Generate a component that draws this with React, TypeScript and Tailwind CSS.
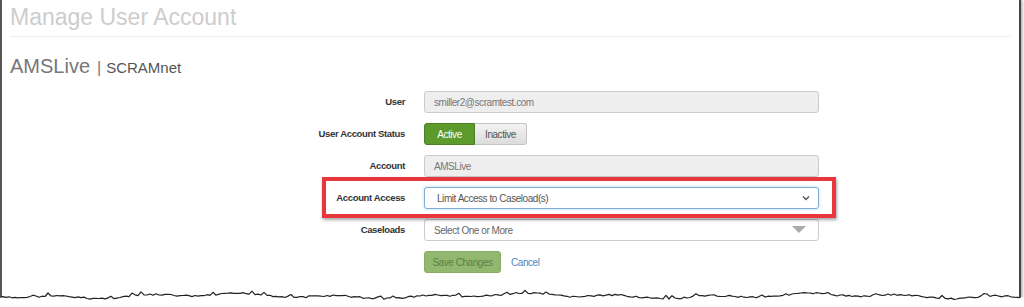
import React from "react";

const FONT = { fontFamily: '"Liberation Sans", Arial, sans-serif' };

function Row({ label, children }: { label: string; children: React.ReactNode }) {
  return (
    <div className="flex h-[22px] items-center">
      <div className="w-[403px] text-right text-[9.5px] font-bold tracking-[-0.35px] text-[#333]">{label}</div>
      <div className="ml-[19px] flex h-full w-[395px] items-center">{children}</div>
    </div>
  );
}

function TornEdge() {
  // jagged paper edge along the bottom
  let seed = 7;
  const rand = () => {
    seed = (seed * 9301 + 49297) % 233280;
    return seed / 233280;
  };
  const pts: string[] = [];
  for (let x = 0; x <= 1022; x += 3) {
    const n =
      Math.sin(x * 0.021) * 1.5 +
      Math.sin(x * 0.067 + 1) * 1.3 +
      (rand() - 0.5) * 1.8 +
      (rand() > 0.93 ? -2.5 : 0);
    pts.push(`${x},${(296 + n).toFixed(1)}`);
  }
  const line = pts.join(" ");
  return (
    <svg className="absolute left-0 top-0" width="1024" height="307" viewBox="0 0 1024 307">
      <polygon points={`${line} 1024,297 1024,307 0,307`} fill="#ffffff" />
      <polyline points={line} fill="none" stroke="#222" strokeWidth="1.2" strokeLinejoin="round" />
    </svg>
  );
}

export default function App() {
  return (
    <div className="relative h-[307px] w-[1024px] overflow-hidden bg-white" style={FONT}>
      <div className="h-[299px] w-[1021px] border-l-2 border-r-2 border-l-[#555] border-r-[#444] shadow-[2px_0_2px_rgba(0,0,0,0.25)]">
        <div className="pl-[8px] pt-[3px] text-[23px] leading-[29px] text-[#cdcdcd]">Manage User Account</div>
        <div className="mx-[8px] mt-[4px] border-t border-[#eee]" />
        <div className="flex items-baseline pl-[8px] pt-[17px]">
          <span className="text-[20px] leading-[24px] text-[#777]">AMSLive</span>
          <span className="ml-[7px] text-[16px] text-[#777]">|</span>
          <span className="ml-[5px] text-[15px] text-[#555]">SCRAMnet</span>
        </div>

        <div className="mt-[11px] flex flex-col gap-[10px] text-[10px] tracking-[-0.45px]">
          <Row label="User">
            <div className="flex h-full w-full items-center rounded-[3px] border border-[#ccc] bg-[#eee] pl-[9px] text-[#777]">
              smiller2@scramtest.com
            </div>
          </Row>
          <Row label="User Account Status">
            <div className="flex h-[22px]">
              <div className="flex w-[51px] items-center justify-center rounded-l-[3px] border border-[#4e7d24] bg-[#5c9a2c] text-white">
                Active
              </div>
              <div className="flex w-[52px] items-center justify-center rounded-r-[3px] border border-l-0 border-[#c4c4c4] bg-gradient-to-b from-[#f4f4f4] to-[#dcdcdc] text-[#555]">
                Inactive
              </div>
            </div>
          </Row>
          <Row label="Account">
            <div className="flex h-full w-full items-center rounded-[3px] border border-[#ccc] bg-[#eee] pl-[9px] text-[#777]">
              AMSLive
            </div>
          </Row>
          <div className="relative">
            <div className="pointer-events-none absolute left-[320px] top-[-10px] h-[41px] w-[514px] border-[4px] border-[#e8363d] shadow-[1px_2px_3px_rgba(0,0,0,0.35)]" />
            <Row label="Account Access">
              <div className="flex h-full w-full items-center justify-between rounded-[3px] border border-[#7eaed6] bg-white pl-[12px] pr-[8px] text-[#555] shadow-[0_0_3px_rgba(102,175,233,0.5)]">
                <span>Limit Access to Caseload(s)</span>
                <svg width="8" height="6" viewBox="0 0 8 6">
                  <path d="M1 1.5 L4 4.5 L7 1.5" fill="none" stroke="#555" strokeWidth="1.4" />
                </svg>
              </div>
            </Row>
          </div>
          <Row label="Caseloads">
            <div className="flex h-full w-full items-center justify-between rounded-[3px] border border-[#ccc] bg-white pl-[9px] pr-[12px] text-[#666]">
              <span>Select One or More</span>
              <svg width="14" height="8" viewBox="0 0 14 8">
                <path d="M0 0 L14 0 L7 7 Z" fill="#aaa" />
              </svg>
            </div>
          </Row>
          <Row label="">
            <div className="flex items-center">
              <div className="flex h-[22px] w-[77px] items-center justify-center rounded-[3px] border border-[#86ab66] bg-[#92b870] text-[#5f7f45]">
                Save Changes
              </div>
              <span className="ml-[10px] text-[#4a86c0]">Cancel</span>
            </div>
          </Row>
        </div>
      </div>
      <TornEdge />
    </div>
  );
}
